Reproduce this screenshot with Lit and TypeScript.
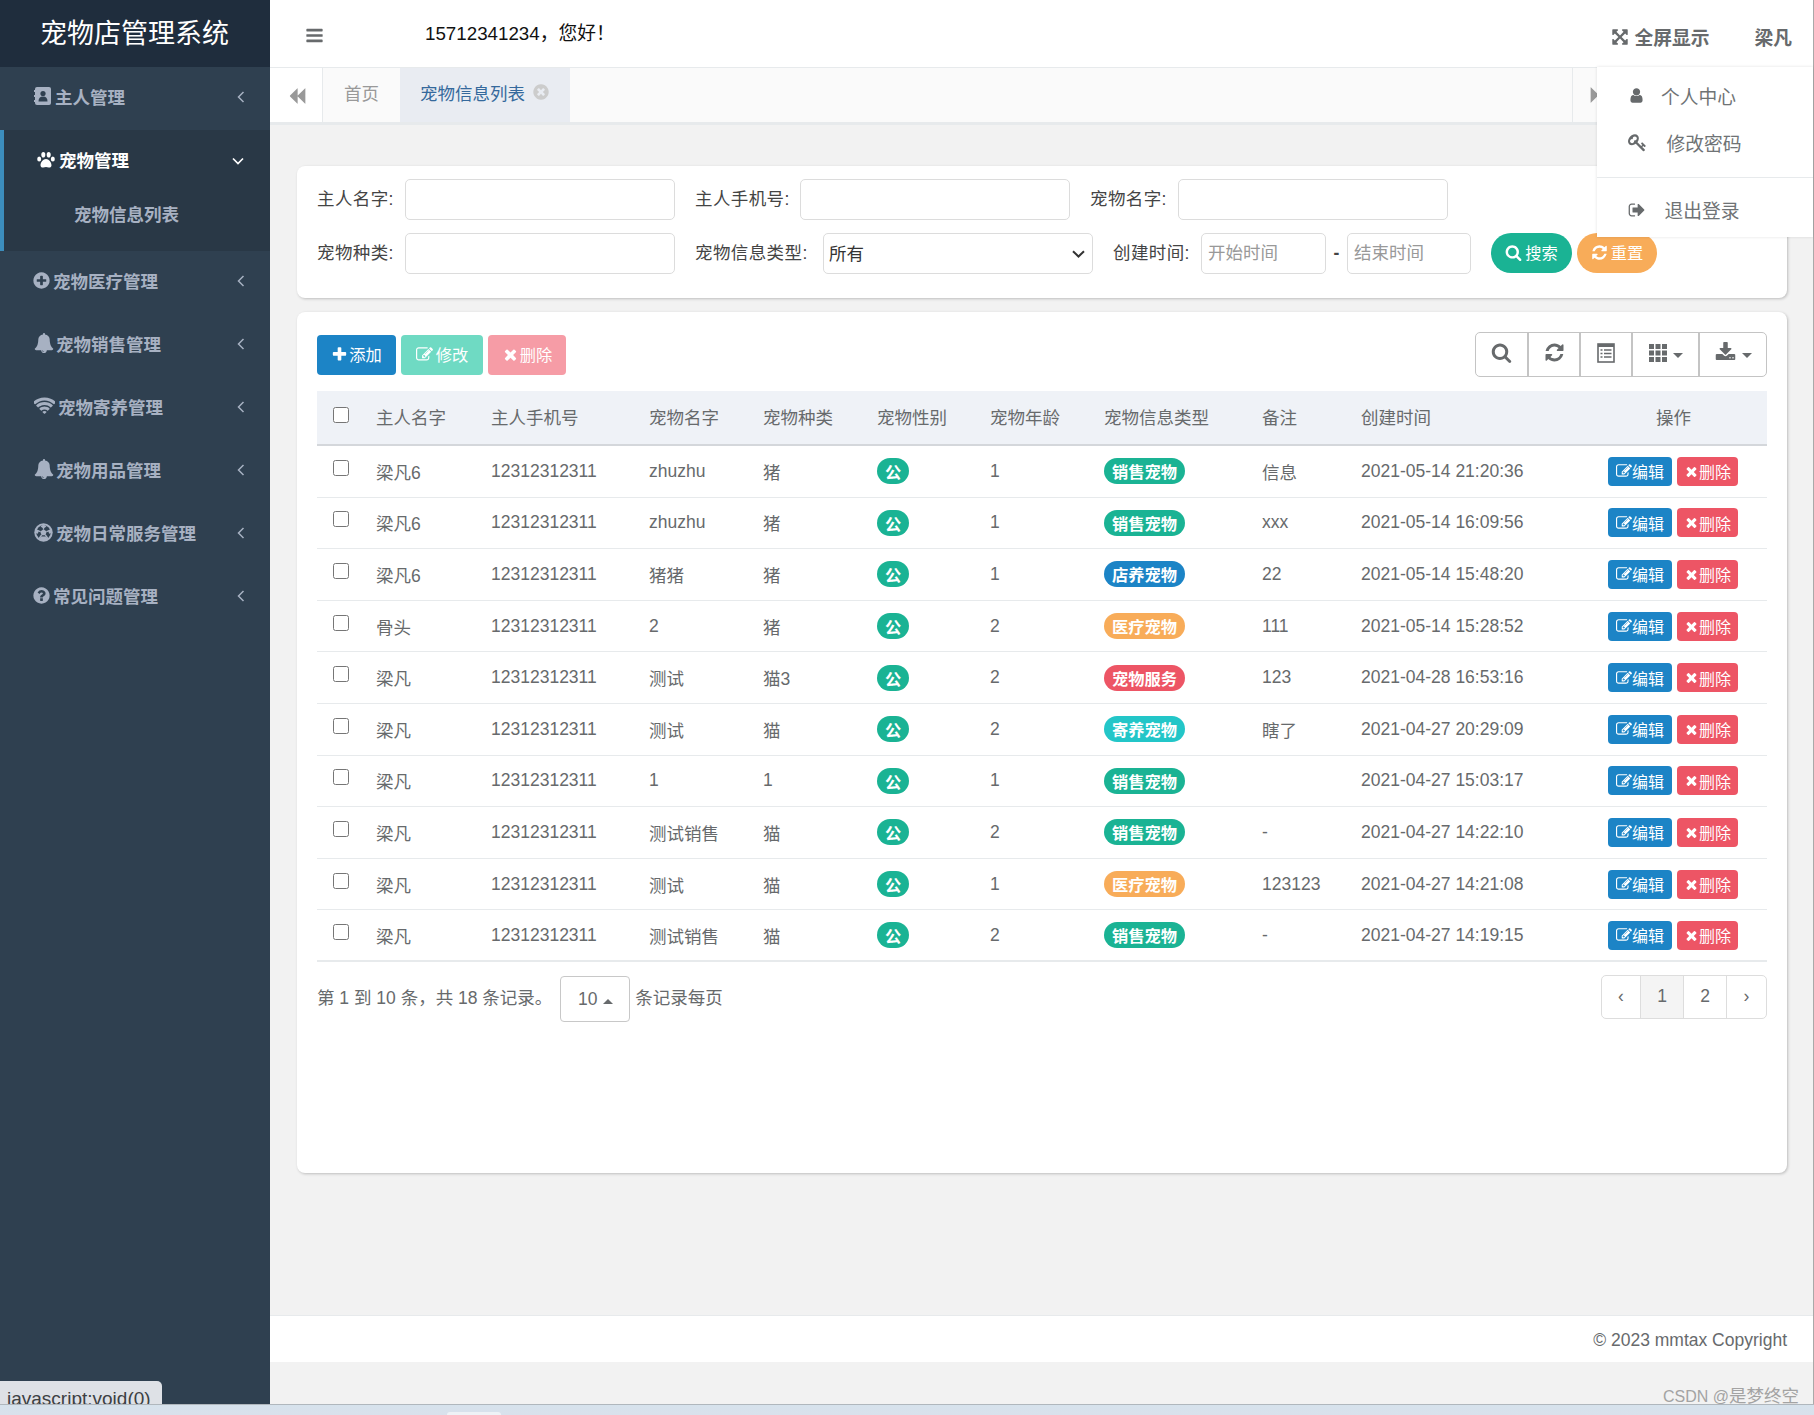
import { LitElement, html, css, svg } from "lit";
import { customElement } from "lit/decorators.js";

const P = {
  bars: "M1664 1344v128q0 26-19 45t-45 19h-1408q-26 0-45-19t-19-45v-128q0-26 19-45t45-19h1408q26 0 45 19t19 45zm0-512v128q0 26-19 45t-45 19h-1408q-26 0-45-19t-19-45v-128q0-26 19-45t45-19h1408q26 0 45 19t19 45zm0-512v128q0 26-19 45t-45 19h-1408q-26 0-45-19t-19-45v-128q0-26 19-45t45-19h1408q26 0 45 19t19 45z",
  search: "M1216 832q0-185-131.5-316.5t-316.5-131.5-316.5 131.5-131.5 316.5 131.5 316.5 316.5 131.5 316.5-131.5 131.5-316.5zm512 832q0 52-38 90t-90 38q-54 0-90-38l-343-342q-179 124-399 124-143 0-273.5-55.5t-225-150-150-225-55.5-273.5 55.5-273.5 150-225 225-150 273.5-55.5 273.5 55.5 225 150 150 225 55.5 273.5q0 220-124 399l343 343q37 37 37 90z",
  refresh: "M1639 1056q0 5-1 7-64 268-268 434.5t-478 166.5q-146 0-282.5-55t-243.5-157l-129 129q-19 19-45 19t-45-19-19-45v-448q0-26 19-45t45-19h448q26 0 45 19t19 45-19 45l-137 137q71 66 161 102t187 36q134 0 250-65t186-179q11-17 53-117 8-23 30-23h192q13 0 22.5 9.5t9.5 22.5zm25-800v448q0 26-19 45t-45 19h-448q-26 0-45-19t-19-45 19-45l138-138q-148-137-349-137-134 0-250 65t-186 179q-11 17-53 117-8 23-30 23h-199q-13 0-22.5-9.5t-9.5-22.5v-7q65-268 270-434.5t480-166.5q146 0 284 55.5t245 156.5l130-129q19-19 45-19t45 19 19 45z",
  user: "M1536 1399q0 109-62.5 187t-150.5 78h-854q-88 0-150.5-78t-62.5-187q0-85 8.5-160.5t31.5-152 58.5-131 94-89 134.5-34.5q131 128 313 128t313-128q76 0 134.5 34.5t94 89 58.5 131 31.5 152 8.5 160.5zm-256-887q0 159-112.5 271.5t-271.5 112.5-271.5-112.5-112.5-271.5 112.5-271.5 271.5-112.5 271.5 112.5 112.5 271.5z",
  plus: "M1600 736v192q0 40-28 68t-68 28h-416v416q0 40-28 68t-68 28h-192q-40 0-68-28t-28-68v-416h-416q-40 0-68-28t-28-68v-192q0-40 28-68t68-28h416v-416q0-40 28-68t68-28h192q40 0 68 28t28 68v416h416q40 0 68 28t28 68z",
  times: "M1490 1322q0 40-28 68l-136 136q-28 28-68 28t-68-28l-294-294-294 294q-28 28-68 28t-68-28l-136-136q-28-28-28-68t28-68l294-294-294-294q-28-28-28-68t28-68l136-136q28-28 68-28t68 28l294 294 294-294q28-28 68-28t68 28l136 136q28 28 28 68t-28 68l-294 294 294 294q28 28 28 68z",
  edit: "M888 1184l116-116-152-152-116 116v56h96v96h56zm440-720q-16-16-33 1l-350 350q-17 17-1 33t33-1l350-350q17-17 1-33zm80 594v190q0 119-84.5 203.5t-203.5 84.5h-832q-119 0-203.5-84.5t-84.5-203.5v-832q0-119 84.5-203.5t203.5-84.5h832q63 0 117 25 15 7 18 23 3 17-9 29l-49 49q-14 14-32 8-23-6-45-6h-832q-66 0-113 47t-47 113v832q0 66 47 113t113 47h832q66 0 113-47t47-113v-126q0-13 9-22l64-64q15-15 35-7t20 29zm-96-738l288 288-672 672h-288v-288zm444 132l-92 92-288-288 92-92q28-28 68-28t68 28l152 152q28 28 28 68t-28 68z",
  bell: "M912 1696q0-16-16-16-59 0-101.5-42.5t-42.5-101.5q0-16-16-16t-16 16q0 73 51.5 124.5t124.5 51.5q16 0 16-16zm816-288q0 52-38 90t-90 38h-448q0 106-75 181t-181 75-181-75-75-181h-448q-52 0-90-38t-38-90q50-42 91-88t85-119.5 74.5-158.5 50-206 19.5-260q0-152 117-282.5t307-158.5q-8-19-8-39 0-40 28-68t68-28 68 28 28 68q0 20-8 39 190 28 307 158.5t117 282.5q0 139 19.5 260t50 206 74.5 158.5 85 119.5 91 88z",
  plusCircle: "M1344 960v-128q0-26-19-45t-45-19h-256v-256q0-26-19-45t-45-19h-128q-26 0-45 19t-19 45v256h-256q-26 0-45 19t-19 45v128q0 26 19 45t45 19h256v256q0 26 19 45t45 19h128q26 0 45-19t19-45v-256h256q26 0 45-19t19-45zm320-64q0 209-103 385.5t-279.5 279.5-385.5 103-385.5-103-279.5-279.5-103-385.5 103-385.5 279.5-279.5 385.5-103 385.5 103 279.5 279.5 103 385.5z",
  question: "M1024 1376v-192q0-14-9-23t-23-9h-192q-14 0-23 9t-9 23v192q0 14 9 23t23 9h192q14 0 23-9t9-23zm256-672q0-88-55.5-163t-138.5-116-170-41q-243 0-371 213-15 24 8 42l132 100q7 6 19 6 16 0 25-12 53-68 86-92 34-24 86-24 48 0 85.5 26t37.5 59q0 38-20 61t-68 45q-63 28-115.5 86.5t-52.5 125.5v36q0 14 9 23t23 9h192q14 0 23-9t9-23q0-19 21.5-49.5t54.5-49.5q32-18 49-28.5t46-35 44.5-48 28-60.5 12.5-81zm384 192q0 209-103 385.5t-279.5 279.5-385.5 103-385.5-103-279.5-279.5-103-385.5 103-385.5 279.5-279.5 385.5-103 385.5 103 279.5 279.5 103 385.5z",
  wifi: "M896 1523q-20 0-93-73.5t-73-93.5q0-32 62.5-54t103.5-22 103.5 22 62.5 54q0 20-73 93.5t-93 73.5zm270-271q-2 0-40-25t-101.5-50-128.5-25-128.5 25-101 50-40.5 25q-18 0-93.5-75t-75.5-93q0-13 10-23 78-77 196-121t233-44 233 44 196 121q10 10 10 23 0 18-75.5 93t-93.5 75zm273-272q-11 0-23-8-136-105-252-154.5t-268-49.5q-85 0-170.5 22t-149 53-113.5 62-79 53-31 22q-17 0-92-75t-75-93q0-12 10-22 132-132 320-205t380-73 380 73 320 205q10 10 10 22 0 18-75 93t-92 75zm271-271q-11 0-22-9-179-157-371.5-236.5t-420.5-79.5-420.5 79.5-371.5 236.5q-11 9-22 9-17 0-92.5-75t-75.5-93q0-13 10-23 187-186 445-288t527-102 527 102 445 288q10 10 10 23 0 18-75.5 93t-92.5 75z",
  expand: "M1411 541l-355 355 355 355 144-144q29-31 70-14 39 17 39 59v448q0 26-19 45t-45 19h-448q-42 0-59-40-17-39 14-69l144-144-355-355-355 355 144 144q31 30 14 69-17 40-59 40h-448q-26 0-45-19t-19-45v-448q0-42 40-59 39-17 69 14l144 144 355-355-355-355-144 144q-19 19-45 19-12 0-24-5-40-17-40-59v-448q0-26 19-45t45-19h448q42 0 59 40 17 39-14 69l-144 144 355 355 355-355-144-144q-31-30-14-69 17-40 59-40h448q26 0 45 19t19 45v448q0 42-39 59-13 5-25 5-26 0-45-19z",
  key: "M832 512q0-80-56-136t-136-56-136 56-56 136q0 42 19 83-41-19-83-19-80 0-136 56t-56 136 56 136 136 56 136-56 56-136q0-42-19-83 41 19 83 19 80 0 136-56t56-136zm851 704q0 17-49 66t-66 49q-9 0-28.5-16t-36.5-33-38.5-40-24.5-26l-96 96 220 220q28 28 28 68 0 42-39 81t-81 39q-40 0-68-28l-671-671q-176 131-365 131-163 0-265.5-102.5t-102.5-265.5q0-160 95-313t248-248 313-95q163 0 265.5 102.5t102.5 265.5q0 189-131 365l355 355 96-96q-2-3-26-24.5t-40-38.5-33-36.5-16-28.5q0-17 49-66t66-49q13 0 23 10 6 6 46 44.5t82 79.5 86.5 86 73 78 28.5 41z",
  signout: "M704 1440q0 4 1 20t.5 26.5-3 23.5-10 19.5-20.5 6.5h-320q-119 0-203.5-84.5t-84.5-203.5v-704q0-119 84.5-203.5t203.5-84.5h320q13 0 22.5 9.5t9.5 22.5q0 4 1 20t.5 26.5-3 23.5-10 19.5-20.5 6.5h-320q-66 0-113 47t-47 113v704q0 66 47 113t113 47h312l11.5 1 11.5 3 8 5.5 7 9 2 13.5zm928-544q0 26-19 45l-544 544q-19 19-45 19t-45-19-19-45v-288h-448q-26 0-45-19t-19-45v-384q0-26 19-45t45-19h448v-288q0-26 19-45t45-19 45 19l544 544q19 19 19 45z",
  backward: "M1683 141q19-19 32-13t13 32v1472q0 26-13 32t-32-13l-710-710q-9-9-13-19v710q0 26-13 32t-32-13l-710-710q-19-19-19-45t19-45l710-710q19-19 32-13t13 32v710q4-10 13-19z",
  timesCircle: "M1277 1122q0-26-19-45l-181-181 181-181q19-19 19-45 0-27-19-46l-90-90q-19-19-46-19-26 0-45 19l-181 181-181-181q-19-19-45-19-27 0-46 19l-90 90q-19 19-19 46 0 26 19 45l181 181-181 181q-19 19-19 45 0 27 19 46l90 90q19 19 46 19 26 0 45-19l181-181 181 181q19 19 45 19 27 0 46-19l90-90q19-19 19-46zm387-226q0 209-103 385.5t-279.5 279.5-385.5 103-385.5-103-279.5-279.5-103-385.5 103-385.5 279.5-279.5 385.5-103 385.5 103 279.5 279.5 103 385.5z",
  download: "M1344 1344q0-26-19-45t-45-19-45 19-19 45 19 45 45 19 45-19 19-45zm256 0q0-26-19-45t-45-19-45 19-19 45 19 45 45 19 45-19 19-45zm128-224v320q0 40-28 68t-68 28h-1472q-40 0-68-28t-28-68v-320q0-40 28-68t68-28h465l135 136q58 56 136 56t136-56l136-136h464q40 0 68 28t28 68zm-325-569q17 41-14 70l-448 448q-18 19-45 19t-45-19l-448-448q-31-29-14-70 17-39 59-39h256v-448q0-26 19-45t45-19h256q26 0 45 19t19 45v448h256q42 0 59 39z",
};

const fa = (d: string, size: number) => html`<svg class="ic" width=${size} height=${size} viewBox="0 0 1792 1792" fill="currentColor"><path d=${d}></path></svg>`;

const addressBook = html`<svg class="ic" width="17" height="18" viewBox="0 0 17 18"><rect x="1" y="0" width="16" height="18" rx="2" fill="currentColor"></rect><rect x="0" y="3" width="2" height="2" fill="currentColor"></rect><rect x="0" y="8" width="2" height="2" fill="currentColor"></rect><rect x="0" y="13" width="2" height="2" fill="currentColor"></rect><circle cx="9" cy="6.5" r="2.6" fill="#2f4050"></circle><path d="M4.5 14.5c0-3.5 1.5-5 4.500-5s4.500 1.500 4.500 5z" fill="#2f4050"></path></svg>`;
const paw = html`<svg class="ic" width="18" height="16" viewBox="0 0 18 16" fill="currentColor"><ellipse cx="2.2" cy="7" rx="2" ry="2.5"></ellipse><ellipse cx="6.3" cy="2.8" rx="2" ry="2.8"></ellipse><ellipse cx="11.7" cy="2.8" rx="2" ry="2.8"></ellipse><ellipse cx="15.8" cy="7" rx="2" ry="2.5"></ellipse><path d="M9 7c-2.800 0-5.500 3.500-5.500 6.200C3.500 15 5 15.800 6.300 15.500c1-.2 1.800-.6 2.700-.6s1.700.4 2.700.6c1.300.3 2.800-.5 2.800-2.300C14.500 10.500 11.800 7 9 7z"></path></svg>`;
const futbol = html`<svg class="ic" width="19" height="19" viewBox="0 0 19 19"><circle cx="9.5" cy="9.500" r="9.200" fill="currentColor"></circle><circle cx="9.5" cy="9.500" r="7.200" fill="#2f4050"></circle><path d="M9.500 6.200l3.200 2.300-1.200 3.800h-4l-1.200-3.800z" fill="currentColor"></path><path d="M9.500 6.500V2M12.500 8.600l4.300-1.400M11.400 12l2.700 3.700M7.600 12l-2.700 3.700M6.500 8.600L2.200 7.200" stroke="currentColor" stroke-width="1.300"></path><path d="M9.500 1.500l3 2-3 2-3-2zM16.800 6l1 3.800-2.700 1-.9-3.300zM2.200 6l2.600 1.500-.9 3.300-2.700-1zM5.200 15.500l2-2h4.600l2 2-2.300 1.800h-4z" fill="currentColor"></path></svg>`;
const grid = html`<svg class="ic" width="18" height="18" viewBox="0 0 18 18" fill="currentColor">${[0, 6.5, 13].map((x) => [0, 6.5, 13].map((y) => svg`<rect x=${x} y=${y} width="5" height="5"></rect>`))}</svg>`;
const listAlt = html`<svg class="ic" width="18" height="20" viewBox="0 0 18 20"><rect x="1" y="1" width="16" height="18" fill="none" stroke="currentColor" stroke-width="1.600"></rect><rect x="1" y="1" width="16" height="3" fill="currentColor"></rect><path d="M3.500 7h2M7 7h7.500M3.500 10.500h2M7 10.500h7.500M3.500 14h2M7 14h7.500" stroke="currentColor" stroke-width="1.300"></path></svg>`;
const chevL = html`<svg class="chev" width="8" height="12" viewBox="0 0 8 12" fill="none" stroke="currentColor" stroke-width="1.500"><path d="M6.500 1L1.500 6l5 5"></path></svg>`;
const chevD = html`<svg class="chev" width="12" height="8" viewBox="0 0 12 8" fill="none" stroke="currentColor" stroke-width="1.700"><path d="M1 1.500l5 5 5-5"></path></svg>`;

interface Menu { icon: unknown; label: string; textAt: number; shift?: boolean; }
const menusTop: Menu[] = [{ icon: addressBook, label: "主人管理", textAt: 21 }];
const menusBottom: Menu[] = [
  { icon: fa(P.plusCircle, 19), label: "宠物医疗管理", textAt: 19, shift: true },
  { icon: fa(P.bell, 20), label: "宠物销售管理", textAt: 22 },
  { icon: fa(P.wifi, 21), label: "宠物寄养管理", textAt: 24 },
  { icon: fa(P.bell, 20), label: "宠物用品管理", textAt: 22 },
  { icon: futbol, label: "宠物日常服务管理", textAt: 22 },
  { icon: fa(P.question, 19), label: "常见问题管理", textAt: 19, shift: true },
];

type Row = [string, string, string, string, string, string, string, string];
const rows: Row[] = [
  ["梁凡6", "zhuzhu", "猪", "1", "销售宠物", "信息", "2021-05-14 21:20:36", "g"],
  ["梁凡6", "zhuzhu", "猪", "1", "销售宠物", "xxx", "2021-05-14 16:09:56", "g"],
  ["梁凡6", "猪猪", "猪", "1", "店养宠物", "22", "2021-05-14 15:48:20", "b"],
  ["骨头", "2", "猪", "2", "医疗宠物", "111", "2021-05-14 15:28:52", "o"],
  ["梁凡", "测试", "猫3", "2", "宠物服务", "123", "2021-04-28 16:53:16", "r"],
  ["梁凡", "测试", "猫", "2", "寄养宠物", "瞎了", "2021-04-27 20:29:09", "c"],
  ["梁凡", "1", "1", "1", "销售宠物", "", "2021-04-27 15:03:17", "g"],
  ["梁凡", "测试销售", "猫", "2", "销售宠物", "-", "2021-04-27 14:22:10", "g"],
  ["梁凡", "测试", "猫", "1", "医疗宠物", "123123", "2021-04-27 14:21:08", "o"],
  ["梁凡", "测试销售", "猫", "2", "销售宠物", "-", "2021-04-27 14:19:15", "g"],
];
const heads = ["主人名字", "主人手机号", "宠物名字", "宠物种类", "宠物性别", "宠物年龄", "宠物信息类型", "备注", "创建时间"];
const colWidths = [59, 115, 158, 114, 114, 113, 114, 158, 99, 247, 159];

@customElement("app-root")
export class AppRoot extends LitElement {
  static styles = css`
    :host { display: block; width: 1814px; height: 1415px; overflow: hidden; position: relative; font-family: "Liberation Sans", "Noto Sans CJK SC", sans-serif; font-size: 17.5px; color: #676a6c; }
    * { box-sizing: border-box; }
    .ic { display: block; flex: none; }
    .shell { display: flex; height: 1404px; }
    .side { width: 270px; flex: none; background: #2f4050; color: #a7b1c2; font-weight: 700; }
    .logo { height: 67px; background: #1f2d3d; color: #fff; font-size: 27px; font-weight: 400; display: flex; align-items: center; padding-left: 40px; padding-bottom: 4px; }
    .mi { height: 63px; display: flex; align-items: center; padding-left: 34px; padding-right: 25px; padding-bottom: 3px; }
    .mi .txt { flex: 1; margin-bottom: 2px; }
    .mi .box { flex: none; margin-bottom: 2px; }
    .mi .box.s .ic { margin-left: -2px; }
    .chev { flex: none; }
    .active { background: #293846; border-left: 4px solid #3c8dbc; height: 121px; }
    .active .mi { color: #fff; padding-left: 33px; padding-right: 26px; padding-bottom: 2px; }
    .active .box { width: 22px; }
    .sub { height: 58px; color: #a7b1c2; padding-left: 70px; display: flex; align-items: center; padding-bottom: 18px; }

    .main { flex: 1; min-width: 0; background: #f2f2f2; border-right: 1px solid #a9a9a9; display: flex; flex-direction: column; position: relative; }
    .top { height: 67px; flex: none; background: #fff; display: flex; align-items: center; color: #676a6c; padding-left: 36px; }
    .burger { margin-top: 3px; margin-left: -1px; }
    .hello { margin-left: 101px; color: #111; font-size: 18.75px; margin-bottom: 4px; }
    .right { margin-left: auto; display: flex; align-items: center; font-weight: 700; font-size: 18.75px; margin-top: 6px; padding-right: 21px; }
    .full { display: flex; align-items: center; gap: 6px; margin-right: 45px; }

    .tabs { height: 58px; flex: none; background: #fafafa; border-top: 1px solid #e7eaec; border-bottom: 3px solid #e7eaec; display: flex; color: #999; }
    .tb { width: 53px; flex: none; background: #fff; border-right: 1px solid #e7eaec; display: flex; align-items: center; justify-content: center; padding-top: 2px; padding-left: 2px; }
    .tab { display: flex; align-items: center; padding-left: 21px; padding-bottom: 6px; width: 77px; flex: none; }
    .tab.on { background: #e9ecf2; color: #35699c; width: 170px; padding-left: 20px; gap: 7px; }
    .tab.on .ic { color: #ccc; }
    .tsp { flex: 1; }
    .tr { width: 241px; flex: none; border-left: 1px solid #e7eaec; display: flex; align-items: center; padding-left: 17px; }

    .content { flex: 1; padding: 41px 26px 0 27px; display: flex; flex-direction: column; gap: 14px; }
    .card { background: #fff; border-radius: 8px; box-shadow: 1px 1px 3px rgba(0, 0, 0, 0.22); }
    .form { height: 132px; padding: 13px 0 0 20px; display: flex; flex-direction: column; gap: 13px; color: #444; flex: none; }
    .frow { display: flex; align-items: center; height: 41px; }
    .lb { flex: none; padding-bottom: 4px; letter-spacing: 0.4px; }
    .w88 { width: 88px; } .w105 { width: 105px; } .w128 { width: 128px; }
    .ipt { height: 41px; border: 1px solid #dcdcdc; border-radius: 5px; background: #fff; font: inherit; color: #333; padding: 0 6px; flex: none; outline: none; }
    .ipt::placeholder { color: #999; }
    .f270 { width: 270px; } .f125 { width: 125px; } .f124 { width: 124px; }
    .ml20 { margin-left: 20px; }
    .selw { position: relative; width: 270px; height: 41px; flex: none; }
    .selw select { appearance: none; width: 100%; padding: 0 0 0 5px; }
    .selw svg { position: absolute; right: 8px; top: 17px; pointer-events: none; color: #333; }
    .dash { width: 21px; text-align: center; flex: none; font-weight: 700; }
    .rbtn { height: 40px; border: 0; border-radius: 20px; color: #fff; font: inherit; font-size: 16.25px; display: flex; align-items: center; justify-content: center; gap: 3px; flex: none; padding: 0 0 2px; margin-top: -1px; }
    .rs { width: 81px; background: #1ab394; margin-left: 20px; }
    .rr { width: 80px; background: #f8ac59; margin-left: 5px; }

    .list { height: 861px; flex: none; padding: 20px 20px 0 20px; }
    .bar { display: flex; height: 45px; }
    .lbtns { display: flex; gap: 5px; padding-top: 3px; height: 43px; }
    .btn { height: 40px; border: 0; border-radius: 4px; color: #fff; font: inherit; font-size: 16.25px; display: flex; align-items: center; justify-content: center; gap: 1px; padding: 0 0 2px; }
    .add { width: 79px; background: #1c84c6; }
    .mod { width: 82px; background: #6fdac3; gap: 3px; }
    .del { width: 78px; background: #f69ca6; gap: 1px; }
    .tools { margin-left: auto; display: flex; border: 1px solid #c4c4c4; border-radius: 5px; height: 45px; color: #676a6c; }
    .tool { display: flex; align-items: center; justify-content: center; gap: 6px; border-right: 2px solid #c4c4c4; padding-bottom: 4px; }
    .tool:last-child { border-right: 0; }
    .t53 { width: 53px; } .t52 { width: 52px; } .t67 { width: 67px; } .tlast { width: 66px; }
    .caret { width: 0; height: 0; border-left: 5px solid transparent; border-right: 5px solid transparent; border-top: 5px solid #676a6c; margin-top: 6px; }

    table { border-collapse: separate; border-spacing: 0; table-layout: fixed; width: 1450px; margin-top: 14px; }
    th { height: 55px; background: #eff2f7; border-bottom: 2px solid #d4d7db; font-weight: 400; text-align: left; padding: 0 0 2px; color: #676a6c; }
    td { height: 51.6px; border-bottom: 1px solid #e7eaec; padding: 0; white-space: nowrap; }
    tr:last-child td { border-bottom: 2px solid #e7eaec; }
    .ck { padding-left: 16px; }
    input[type="checkbox"] { width: 16px; height: 16px; margin: 0 0 7px; display: block; }
    th input[type="checkbox"] { margin-bottom: 3px; }
    th.opc { padding-left: 48px; }
    .pill { display: inline-flex; align-items: center; justify-content: center; height: 26px; border-radius: 13px; color: #fff; font-size: 16.25px; font-weight: 700; vertical-align: middle; }
    .gen { width: 32px; background: #1ab394; }
    .type { width: 81px; }
    .g { background: #1ab394; } .b { background: #1c84c6; } .o { background: #f8ac59; } .r { background: #ed5565; } .c { background: #23c6c8; }
    .ops { display: flex; gap: 5px; }
    .op { height: 29px; border-radius: 4px; color: #fff; display: flex; align-items: center; justify-content: center; font-size: 16px; border: 0; padding: 0; font-family: inherit; gap: 0; }
    .oe { width: 64px; background: #1c84c6; }
    .od { width: 61px; background: #ed5565; }

    .pg { display: flex; margin-top: 12px; align-items: flex-start; }
    .pinfo { margin-top: 10px; }
    .psel { width: 70px; height: 46px; border: 1px solid #c8c8c8; border-radius: 4px; margin: 2px 5px 0 8px; display: flex; align-items: center; justify-content: center; gap: 5px; padding-top: 2px; }
    .psel .caret { border-top: 0; border-bottom: 5px solid #676a6c; margin-top: 3px; }
    .pager { margin-left: auto; display: flex; height: 44px; margin-top: 1px; border: 1px solid #ddd; border-radius: 5px; }
    .pi { display: flex; align-items: center; justify-content: center; border-right: 1px solid #ddd; width: 43px; }
    .pi:first-child { width: 39px; } .pi:last-child { width: 39px; border-right: 0; }
    .pi.cur { background: #f4f4f4; }

    .foot { height: 47px; flex: none; margin-bottom: 42px; background: #fff; border-top: 1px solid #e7eaec; display: flex; align-items: center; justify-content: flex-end; padding-right: 26px; padding-top: 3px; }

    .drop { position: absolute; left: 1327px; top: 67px; width: 216px; height: 170px; background: #fff; box-shadow: 0 0 3px rgba(0, 0, 0, 0.12); padding-top: 5px; font-size: 18.75px; font-weight: 400; color: #6f7375; z-index: 5; }
    .di { height: 47px; display: flex; align-items: center; padding-left: 31px; }
    .di span.b0 { flex: none; color: #676a6c; }
    .b33 { width: 33px; } .b38 { width: 38.5px; } .b36 { width: 36.5px; }
    .sep { height: 1px; background: #e7eaec; margin: 11px 0 8px; }

    .task { height: 11px; background: linear-gradient(#d6e2ec, #d9e1ec); border-top: 1px solid #b0b7bd; position: relative; z-index: 9; }
    .task i { position: absolute; left: 447px; top: 7px; width: 54px; height: 3px; background: #eef2f6; border-radius: 3px 3px 0 0; }
    .status { position: absolute; left: 0; top: 1381px; width: 162px; height: 23px; background: #dee1e6; border-top-right-radius: 5px; padding: 7px 0 0 7px; font-size: 19px; line-height: 22px; color: #3c4043; overflow: hidden; white-space: nowrap; z-index: 6; }
    .mark { position: absolute; left: 1663px; top: 1385px; font-size: 16px; line-height: 22px; color: #a3a3a3; white-space: nowrap; z-index: 6; }
    .mark b { font-weight: 400; font-size: 17.5px; }
  `;

  private menu(m: Menu) {
    return html`<div class="mi"><span class="box ${m.shift ? "s" : ""}" style="width:${m.textAt}px">${m.icon}</span><span class="txt">${m.label}</span>${chevL}</div>`;
  }

  render() {
    return html`
      <div class="shell">
        <aside class="side">
          <div class="logo">宠物店管理系统</div>
          ${menusTop.map((m) => this.menu(m))}
          <div class="active">
            <div class="mi"><span class="box">${paw}</span><span class="txt">宠物管理</span>${chevD}</div>
            <div class="sub">宠物信息列表</div>
          </div>
          ${menusBottom.map((m) => this.menu(m))}
        </aside>
        <div class="main">
          <header class="top">
            <span class="burger">${fa(P.bars, 19)}</span>
            <span class="hello">15712341234，您好！</span>
            <div class="right">
              <span class="full">${fa(P.expand, 18)}全屏显示</span>
              <span>梁凡</span>
            </div>
          </header>
          <nav class="tabs">
            <div class="tb">${fa(P.backward, 18)}</div>
            <div class="tab">首页</div>
            <div class="tab on">宠物信息列表 ${fa(P.timesCircle, 18)}</div>
            <div class="tsp"></div>
            <div class="tr"><svg class="ic" width="18" height="18" viewBox="0 0 1792 1792" fill="currentColor"><path transform="translate(1792,0) scale(-1,1)" d=${P.backward}></path></svg></div>
          </nav>
          <div class="content">
            <section class="card form">
              <div class="frow">
                <span class="lb w88">主人名字:</span><input class="ipt f270" />
                <span class="lb w105 ml20">主人手机号:</span><input class="ipt f270" />
                <span class="lb w88 ml20">宠物名字:</span><input class="ipt f270" />
              </div>
              <div class="frow">
                <span class="lb w88">宠物种类:</span><input class="ipt f270" />
                <span class="lb w128 ml20">宠物信息类型:</span>
                <div class="selw">
                  <select class="ipt"><option>所有</option></select>
                  <svg width="13" height="8" viewBox="0 0 13 8" fill="none" stroke="currentColor" stroke-width="2"><path d="M1 1.200l5.500 5.300 5.500-5.300"></path></svg>
                </div>
                <span class="lb w88 ml20">创建时间:</span>
                <input class="ipt f125" placeholder="开始时间" />
                <span class="dash">-</span>
                <input class="ipt f124" placeholder="结束时间" />
                <button class="rbtn rs">${fa(P.search, 17)}搜索</button>
                <button class="rbtn rr">${fa(P.refresh, 17)}重置</button>
              </div>
            </section>
            <section class="card list">
              <div class="bar">
                <div class="lbtns">
                  <button class="btn add">${fa(P.plus, 17)}添加</button>
                  <button class="btn mod">${fa(P.edit, 17)}修改</button>
                  <button class="btn del">${fa(P.times, 17)}删除</button>
                </div>
                <div class="tools">
                  <div class="tool t53">${fa(P.search, 21)}</div>
                  <div class="tool t52">${fa(P.refresh, 21)}</div>
                  <div class="tool t52">${listAlt}</div>
                  <div class="tool t67">${grid}<span class="caret"></span></div>
                  <div class="tool tlast">${fa(P.download, 21)}<span class="caret"></span></div>
                </div>
              </div>
              <table>
                <colgroup>${colWidths.map((w) => html`<col style="width:${w}px" />`)}</colgroup>
                <thead>
                  <tr>
                    <th class="ck"><input type="checkbox" /></th>
                    ${heads.map((h) => html`<th>${h}</th>`)}
                    <th class="opc">操作</th>
                  </tr>
                </thead>
                <tbody>
                  ${rows.map((r) => html`<tr>
                    <td class="ck"><input type="checkbox" /></td>
                    <td>${r[0]}</td>
                    <td>12312312311</td>
                    <td>${r[1]}</td>
                    <td>${r[2]}</td>
                    <td><span class="pill gen">公</span></td>
                    <td>${r[3]}</td>
                    <td><span class="pill type ${r[7]}">${r[4]}</span></td>
                    <td>${r[5]}</td>
                    <td>${r[6]}</td>
                    <td><div class="ops">
                      <button class="op oe">${fa(P.edit, 16)}编辑</button>
                      <button class="op od">${fa(P.times, 15)}删除</button>
                    </div></td>
                  </tr>`)}
                </tbody>
              </table>
              <div class="pg">
                <span class="pinfo">第 1 到 10 条，共 18 条记录。</span>
                <span class="psel">10<span class="caret"></span></span>
                <span class="pinfo">条记录每页</span>
                <div class="pager">
                  <span class="pi">‹</span><span class="pi cur">1</span><span class="pi">2</span><span class="pi">›</span>
                </div>
              </div>
            </section>
          </div>
          <footer class="foot">© 2023 mmtax Copyright</footer>
          <div class="drop">
            <div class="di"><span class="b0 b33">${fa(P.user, 17)}</span>个人中心</div>
            <div class="di"><span class="b0 b38">${fa(P.key, 19)}</span>修改密码</div>
            <div class="sep"></div>
            <div class="di"><span class="b0 b36">${fa(P.signout, 18)}</span>退出登录</div>
          </div>
        </div>
      </div>
      <div class="task"><i></i></div>
      <div class="status">javascript:void(0)</div>
      <div class="mark">CSDN @<b>是梦终空</b></div>
    `;
  }
}
